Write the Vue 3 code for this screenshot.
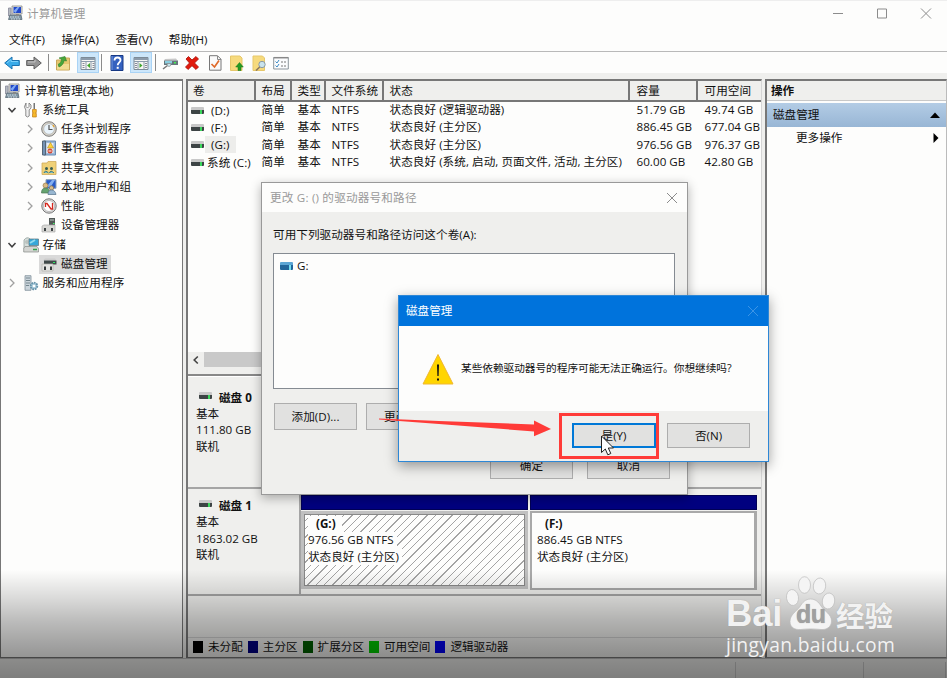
<script setup>
const icons = {
  computer: '<path d="M5 1h10v8H5z" fill="#e4e4de" stroke="#888" stroke-width=".8"/><path d="M6.500 2h7.500v6H6.500z" fill="#2148c8"/><path d="M6.500 6l4-4h2l-4 6z" fill="#7ea9f5"/><path d="M1.500 3h2.500v8H1.500z" fill="#b4bac0" stroke="#889" stroke-width=".8"/><path d="M3 10h11l1 4.500H1.500z" fill="#7f95a3" stroke="#5b6b75" stroke-width=".8"/><path d="M3 12h10M4 14h9" stroke="#d7e2e8" stroke-dasharray="1.500 1"/><path d="M9 9h3v2H9z" fill="#888"/>',
  back: '<path d="M8 2v3.500h7.300v5H8V14L.7 8z" fill="#39aae8" stroke="#1b72b0"/><path d="M3 8l4-3.500v2h7" fill="none" stroke="#7bd0fa"/>',
  forward: '<path d="M8 2v3.500H.7v5H8V14l7.300-6z" fill="#969696" stroke="#5d5d5d"/><path d="M2 7h7V5" fill="none" stroke="#c4c4c4"/>',
  folderup: '<path d="M1.500 5h6l1-2h6v12h-13z" fill="#e6c76e" stroke="#c9a658"/><path d="M2 9h12v5.500H2z" fill="#f3dc92"/><path d="M4 12c3-1 5-4 5-6.500l2.500.5L10 1.500 4 3l2.500 1.200C6.500 6.500 5 8.500 3 9.500z" fill="#48a63a" stroke="#2e7d2a" stroke-width=".6"/>',
  panel: '<path d="M1 2.500h14v12H1z" fill="#f7f7f4" stroke="#7c8b98"/><path d="M1 3h14v2H1z" fill="#8c9bab"/><path d="M1 6.500h14M6 7v7M11 7v7" stroke="#8c9bab"/><path d="M2.500 8.500h2m-2 2h2m-2 2h2m8-4h2m-2 2h2m-2 2h2" stroke="#889"/><path d="M10 8v5L7 10.500z" fill="#42a72e"/>',
  panel2: '<path d="M1 2.500h14v12H1z" fill="#f7f7f4" stroke="#7c8b98"/><path d="M1 3h14v2H1z" fill="#8c9bab"/><path d="M1 6.500h14M5 7v7M11 7v7" stroke="#8c9bab"/><path d="M2 8.500h2m-2 2h2m-2 2h2m8-4h2m-2 2h2m-2 2h2" stroke="#889"/><path d="M6.500 8v5l3-2.500z" fill="#42a72e"/>',
  help: '<path d="M2 .5h12v15H2z" fill="#3461bf" stroke="#173883"/><path d="M3 1v14" stroke="#7397df"/><path d="M5.500 5.500q0-3 3-3t3 2.700c0 2-2.800 2.300-2.800 5" fill="none" stroke="#fff" stroke-width="1.800"/><path d="M7.700 11.800h2v2h-2z" fill="#fff"/>',
  device: '<path d="M3 4l11-.5 1.500 2H2z" fill="#c8c8c8"/><path d="M2 5.500h14v4.500H2z" fill="#66757c"/><path d="M3 6h7v2.500H3z" fill="#8acfe0"/><path d="M12 7h2v1.500h-2z" fill="#4e5"/><path d="M5.500 10.500L1 14" stroke="#777" stroke-width="1.500"/><path d="M5 8.500h4q0 3-2 3t-2-3z" fill="#c8e7ef" stroke="#888" stroke-width=".7"/>',
  cross: '<path d="M2 4l2.500-2.500L8 5l4-3.500L14.500 4 10.500 8l4 4-2.500 2.500L8 10.700 4 14.500 1.500 12l4-4z" fill="#e21a0c" stroke="#a60c05" stroke-width=".8"/>',
  check: '<path d="M2.500.7h8l3.500 3.500v11H2.500z" fill="#fafafa" stroke="#777"/><path d="M10.500 1v3.500H14" fill="none" stroke="#888"/><path d="M4.500 9l3 3L12 5.500" fill="none" stroke="#df6a2a" stroke-width="1.700"/>',
  upfile: '<path d="M1.500 1h9.500l2 2v12.500H1.500z" fill="#f6da7d" stroke="#e6c76a"/><path d="M9 15.500V12H6.700l3.800-4.500 3.800 4.500H12v3.500z" fill="#249b23" stroke="#167418" stroke-width=".5"/>',
  search: '<path d="M2 1h9.500l2 2v12.500H2z" fill="#f6da7d" stroke="#e6c76a"/><circle cx="11" cy="9.500" r="3.200" fill="#c9e3ed" stroke="#8b9aa2"/><path d="M8.700 12L5 15.500" stroke="#8c7960" stroke-width="1.600"/>',
  list: '<path d="M.7 2.500h14.600v11.500H.7z" fill="#fbfcfd" stroke="#8b959c"/><path d="M.7 2.700h14.600" stroke="#888" stroke-width="1.500"/><path d="M2.500 6.500l1.500 1.500L6 5M2.500 10.500L4 12l2-3" fill="none" stroke="#3c8ac4"/><path d="M8 7h5M8 11h5" stroke="#777" stroke-dasharray="2 1"/>',
  tools: '<path d="M3 1v3.500L4.500 6 6 4.500V1q3 1.500 2 5L6.200 8v6q-1.700 2-3.400 0V8Q0 5 3 1z" fill="#eee" stroke="#727272" stroke-width=".8"/><path d="M10.500 1h1.500v6h-1.500z" fill="#777"/><path d="M9.500 7.500h3.800v3h-.7v1h.7v3.500H9.500v-3.500h.7v-1h-.7z" fill="#f6b92a" stroke="#c17b13" stroke-width=".7"/>',
  clock: '<circle cx="8" cy="8" r="7.300" fill="#d6d2c8" stroke="#7e7e7e"/><circle cx="8" cy="8" r="5.300" fill="#eaf4fb" stroke="#aaa" stroke-width=".6"/><path d="M8 4v4.500h3.500" fill="none" stroke="#555" stroke-width="1.200"/><path d="M12 4l1 2" stroke="#e7a83a" stroke-width="1.500"/>',
  event: '<path d="M3 1h11.500v14H3z" fill="#9bb7d7" stroke="#6a8db4"/><path d="M1.500 1h3v14h-3z" fill="#7291b4" stroke="#567"/><path d="M5.500 3h7v10h-7z" fill="#e9edf4"/><path d="M9.500 2.500L12.500 8h-6z" fill="#ffd43a" stroke="#b98b15" stroke-width=".6"/><circle cx="9" cy="11" r="2.500" fill="#d34835"/><path d="M7.500 11h3" stroke="#fff"/>',
  share: '<path d="M1 3h5l1-1.500h8v13H1z" fill="#efd178" stroke="#cfab5c" stroke-width=".8"/><circle cx="5.500" cy="8.500" r="1.500" fill="#365d52"/><circle cx="10.500" cy="8.500" r="1.500" fill="#365d52"/><path d="M3 13q1-3.500 4.500 0M8.500 13q1-3.500 4.500 0" fill="#78bcc1" stroke="#36767f"/>',
  users: '<path d="M5 .7h10v8.600H5z" fill="#275bc9" stroke="#8ca0b7"/><path d="M6 7l5-6h3L9 9z" fill="#84aff0"/><circle cx="4.500" cy="6.500" r="2.500" fill="#dab984" stroke="#8b6f39" stroke-width=".6"/><path d="M.5 14q0-5 4-5t4 5z" fill="#65a36f" stroke="#4a7554" stroke-width=".7"/><circle cx="10.500" cy="9" r="2.200" fill="#d8bb8b" stroke="#7c684a" stroke-width=".7"/><path d="M7 15.500q0-4.500 3.500-4.500t4.500 4.500z" fill="#98b7d1" stroke="#54728b" stroke-width=".7"/>',
  perf: '<circle cx="8" cy="8" r="7.200" fill="#ddd" stroke="#777"/><circle cx="8" cy="8" r="5.500" fill="#fff" stroke="#999" stroke-width=".6"/><path d="M4.500 9V5.500h1.500L10 11h1.500V5" fill="none" stroke="#d5281e" stroke-width="1.300"/>',
  devmgr: '<path d="M8 1h6v8H8z" fill="#525957"/><path d="M9 2h4v2H9z" fill="#87908d"/><path d="M12 6h1.500v1H12z" fill="#4f6"/><path d="M1 9l2-1h11v7H1z" fill="#d8d8d5" stroke="#aaa" stroke-width=".7"/><path d="M3 11h2v3H3zM10 11h2v3h-2z" fill="#3d4244"/>',
  storage: '<path d="M1 3q3-4 6-1v10H1z" fill="#d7dedb" stroke="#879692" stroke-width=".7"/><circle cx="4" cy="5" r="2" fill="#bac2be"/><path d="M6 2h9.500v6.500H6z" fill="#35a8d9" stroke="#687d85" stroke-width=".8"/><path d="M7 6l5-3" stroke="#91dbef" stroke-width="2"/><path d="M2 9.500h12l1.500 2v3.500H.7v-3.500z" fill="#d4d5d2" stroke="#858a87" stroke-width=".7"/><path d="M10 12.500h4" stroke="#2da349" stroke-width="1.500"/>',
  diskmgr: '<path d="M4 2.500h10l1.500 2H2z" fill="#ccc"/><path d="M3 4.500h12.500v4H3z" fill="#40494a"/><path d="M12 6h2v1h-2z" fill="#2ded63"/><path d="M1 8h11v7H1z" fill="#e4e4e2" stroke="#b2b2ad" stroke-width=".7"/><path d="M3 10.500h2V14H3zM9 10.500h2V14H9z" fill="#353a3c"/>',
  services: '<path d="M2 .7h6v14.600H2z" fill="#cbd5dc" stroke="#82919a" stroke-width=".8"/><path d="M3 3h4M3 5.500h4M3 8h4M3 10.500h3" stroke="#74868e"/><circle cx="11" cy="11" r="3.300" fill="#a7c9da" stroke="#6793aa" stroke-width="1.800" stroke-dasharray="1.700 .8"/><circle cx="11" cy="11" r="1.300" fill="#fff"/>',
}
const tree = [
  { t: '计算机管理(本地)', i: 'computer', l: 0 },
  { t: '系统工具', i: 'tools', l: 1, a: 'down' },
  { t: '任务计划程序', i: 'clock', l: 2, a: 'right' },
  { t: '事件查看器', i: 'event', l: 2, a: 'right' },
  { t: '共享文件夹', i: 'share', l: 2, a: 'right' },
  { t: '本地用户和组', i: 'users', l: 2, a: 'right' },
  { t: '性能', i: 'perf', l: 2, a: 'right' },
  { t: '设备管理器', i: 'devmgr', l: 2 },
  { t: '存储', i: 'storage', l: 1, a: 'down' },
  { t: '磁盘管理', i: 'diskmgr', l: 2, sel: true },
  { t: '服务和应用程序', i: 'services', l: 1, a: 'right' },
]
const tools = [
  { i: 'back' }, { i: 'forward' }, { sep: true },
  { i: 'folderup', wide: true }, { i: 'panel', on: true }, { sep: true },
  { i: 'help', wide: true }, { i: 'panel2', on: true }, { sep: true },
  { i: 'device' }, { i: 'cross' }, { i: 'check' }, { i: 'upfile' }, { i: 'search' }, { i: 'list' },
]
const heads = ['卷', '布局', '类型', '文件系统', '状态', '容量', '可用空间']
const rows = [
  ['(D:)', '状态良好 (逻辑驱动器)', '51.79 GB', '49.74 GB'],
  ['(F:)', '状态良好 (主分区)', '886.45 GB', '677.04 GB'],
  ['(G:)', '状态良好 (主分区)', '976.56 GB', '976.37 GB'],
  ['系统 (C:)', '状态良好 (系统, 启动, 页面文件, 活动, 主分区)', '60.00 GB', '42.80 GB'],
]
const legend = [
  ['black', '未分配'], ['navy', '主分区'], ['dgreen', '扩展分区'], ['green', '可用空间'], ['blue', '逻辑驱动器'],
]
</script>

<template>
  <div class="win">
    <header class="title">
      <svg class="ic" viewBox="0 0 16 16" v-html="icons.computer"></svg>
      <span>计算机管理</span>
      <svg class="ctl" viewBox="0 0 100 12"><path d="M1 6.500h10M45.500 2h9v9h-9zM89 1.500l10 10M99 1.500l-10 10" /></svg>
    </header>
    <nav class="menu"><span>文件(F)</span><span>操作(A)</span><span>查看(V)</span><span>帮助(H)</span></nav>
    <div class="toolbar">
      <template v-for="(t, n) in tools" :key="n">
        <i v-if="t.sep" class="sep"></i>
        <b v-else :class="['tb', { on: t.on, wide: t.wide }]"><svg viewBox="0 0 16 16" v-html="icons[t.i]"></svg></b>
      </template>
    </div>

    <main class="panes">
      <section class="tree">
        <div v-for="r in tree" :key="r.t" :class="['node', 'l' + r.l]">
          <span v-if="r.l" class="arr">
            <svg v-if="r.a === 'down'" viewBox="0 0 10 10"><path d="M1.500 3L5 6.800 8.500 3" stroke="#404040" stroke-width="1.500" fill="none" /></svg>
            <svg v-if="r.a === 'right'" viewBox="0 0 10 10"><path d="M3 1l4 4-4 4" stroke="#a0a0a0" stroke-width="1.300" fill="none" /></svg>
          </span>
          <span :class="['lab', { sel: r.sel }]">
            <svg class="ic" viewBox="0 0 16 16" v-html="icons[r.i]"></svg>
            <span>{{ r.t }}</span>
          </span>
        </div>
      </section>

      <section class="mid">
        <div class="row head"><span v-for="h in heads" :key="h">{{ h }}</span></div>
        <div class="list">
          <div v-for="r in rows" :key="r[0]" class="row">
            <span class="vol"><i class="drive"></i><em :class="{ hot: r[0] === '(G:)', wide: r[0].length > 4 }">{{ r[0] }}</em></span>
            <span>简单</span><span>基本</span><span>NTFS</span>
            <span>{{ r[1] }}</span><span>{{ r[2] }}</span><span>{{ r[3] }}</span>
          </div>
        </div>
        <div class="hscroll">
          <svg viewBox="0 0 10 10"><path d="M6.800 1.500L3.200 5l3.600 3.500" stroke="#444" stroke-width="1.600" fill="none" /></svg>
          <i></i>
        </div>
        <div class="disks">
          <div class="disk d0">
            <div class="info"><p class="dn"><i class="drive"></i><b>磁盘 0</b></p><p>基本</p><p>111.80 GB</p><p>联机</p></div>
          </div>
          <div class="disk d1">
            <div class="info"><p class="dn"><i class="drive"></i><b>磁盘 1</b></p><p>基本</p><p>1863.02 GB</p><p>联机</p></div>
            <div class="part pg">
              <div class="bar"></div>
              <div class="pbody hatch">
                <p><b>(G:)</b></p><p><span>976.56 GB NTFS</span></p><p><span>状态良好 (主分区)</span></p>
              </div>
            </div>
            <div class="part pf">
              <div class="bar"></div>
              <div class="pbody">
                <p><b>(F:)</b></p><p><span>886.45 GB NTFS</span></p><p><span>状态良好 (主分区)</span></p>
              </div>
            </div>
          </div>
        </div>
        <div class="legend">
          <span v-for="l in legend" :key="l[0]"><i :class="l[0]"></i>{{ l[1] }}</span>
        </div>
      </section>

      <section class="actions">
        <div class="ahead">操作</div>
        <div class="asel"><span>磁盘管理</span><svg viewBox="0 0 10 6"><path d="M0 6l5-5.500L10 6z" /></svg></div>
        <div class="amore"><span>更多操作</span><svg viewBox="0 0 6 10"><path d="M.5 0l5 5-5 5z" /></svg></div>
      </section>
    </main>
    <footer class="status"><i></i><i></i><i></i></footer>

    <div class="dlg">
      <div class="dt"><span>更改 G: () 的驱动器号和路径</span><svg viewBox="0 0 12 12"><path d="M1 1l10 10M11 1L1 11" stroke="#8c8c8c" fill="none" /></svg></div>
      <div class="db">
        <p>可用下列驱动器号和路径访问这个卷(A):</p>
        <div class="box"><i class="drive bl"></i>G:</div>
        <div class="btns"><span class="btn">添加(D)...</span><span class="btn">更改(C)...</span></div>
        <div class="btns end"><span class="btn">确定</span><span class="btn">取消</span></div>
      </div>
    </div>

    <div class="msg">
      <div class="mt"><span>磁盘管理</span><svg viewBox="0 0 12 12"><path d="M1 1l10 10M11 1L1 11" stroke="#3b94e6" fill="none" /></svg></div>
      <div class="mb">
        <svg viewBox="0 0 32 32"><path d="M16 1.500L31 31H1z" fill="#ffd500" stroke="#f0b732" /><path d="M15 11.500h2l-.4 11.500h-1.200zM15 25.500h2v2h-2z" fill="#111" /></svg>
        <span>某些依赖驱动器号的程序可能无法正确运行。你想继续吗?</span>
      </div>
      <div class="mf"><span class="btn prim">是(Y)</span><span class="btn">否(N)</span></div>
    </div>

    <svg class="note" viewBox="0 0 290 60">
      <path d="M0 8.600L60 11 155 14.500V10.500L172 19 155 26.300V21.500L60 14 0 9.600z" fill="#ff3b38" />
      <rect x="181.500" y="4.500" width="97" height="43" fill="none" stroke="#ff3b38" stroke-width="3" />
      <path d="M222.500 26v16.500l3.800-3.500 2.500 5.800 3-1.300-2.500-5.500h5.200z" fill="#fff" stroke="#222" />
    </svg>

    <div class="shade"></div>

    <div class="mark">
      <div class="brand">
        <span class="bai">Bai</span>
        <span class="paw">
          <svg viewBox="0 0 56 56">
            <g fill="#f4f4f4" stroke="#bcbcbc" stroke-width=".7">
              <ellipse cx="7.500" cy="21.500" rx="6" ry="8" transform="rotate(-8 7.500 21.500)" />
              <ellipse cx="19.500" cy="9" rx="6" ry="8.300" />
              <ellipse cx="34.500" cy="10" rx="6.200" ry="8" transform="rotate(8 34.500 10)" />
              <ellipse cx="43.500" cy="25" rx="6.200" ry="8" transform="rotate(10 43.500 25)" />
              <path d="M25.500 23c5 0 8 3 10.500 7 3.500 5.500 10.500 8 10.500 15 0 6-5 9-10.500 8.500-7-.8-14-.8-20.500 0C10 54 5 51.500 5 45.500c0-7 6.500-10 10-15 2.500-4 5.500-7.500 10.500-7.500z" />
            </g>
          </svg>
          <em>du</em>
        </span>
        <span class="jy">经验</span>
      </div>
      <div class="url">jingyan.baidu.com</div>
    </div>
  </div>
</template>

<style>
body { margin: 0; overflow: hidden; }
</style>

<style scoped>
* { box-sizing: border-box; }
p { margin: 0; }
em, i { font-style: normal; }
svg { display: block; flex: none; }
.win { position: relative; width: 947px; height: 678px; overflow: hidden; display: flex; flex-direction: column; background: #efefed; color: #111; font: 11.6px/16px "Open Sans", "Noto Sans CJK SC", sans-serif; white-space: nowrap; }
.ic { width: 16px; height: 16px; }
.title { height: 28px; padding: 0 15px 2px 7px; display: flex; align-items: center; gap: 4px; background: #fdfdfc; border-top: 1px solid #eee; color: #999; }
.title .ic { margin-bottom: 1px; }
.title span { letter-spacing: .1px; }
.ctl { width: 100px; height: 12px; margin: 0 0 1px auto; fill: none; stroke: #8c8c8c; }
.menu { height: 24px; padding: 1px 9px 0; display: flex; align-items: center; gap: 16.500px; background: #fdfdfc; border-bottom: 1px solid #b9b9b9; }
.toolbar { height: 21px; padding: 0 1px; display: flex; align-items: center; background: #fdfdfc; }
.tb { width: 22.200px; height: 21px; display: flex; align-items: center; justify-content: center; }
.tb svg { width: 16px; height: 16px; }
.tb.on { background: #cce6fa; border: 1px solid #a9d3f5; }
.tb.wide { margin-right: 2px; }
.sep { width: 1px; height: 17px; background: #8b8b8b; margin: 0 3.500px 0 2.500px; }
.panes { height: 585px; padding-top: 6px; display: grid; grid-template-columns: 183px 576px 182px; column-gap: 3px; }
.panes > section { height: 579px; min-width: 0; overflow: hidden; }
.tree { border: 1px solid #777; border-top: 2px solid #777; background: #fdfdfc; }
.node { height: 19.270px; display: flex; align-items: center; }
.node.l0 { padding-left: 3px; }
.node.l1 { padding-left: 2.500px; }
.node.l2 { padding-left: 21px; }
.arr { width: 17px; padding-left: 3px; }
.arr svg { width: 10px; height: 10px; }
.lab { display: flex; align-items: center; gap: 4px; height: 19px; padding: 0 3px 0 2px; }
.l0 .lab { padding-left: 0; gap: 4.500px; }
.lab span { letter-spacing: .1px; }
.lab.sel { background: #d9d9d9; }
.mid { border-left: 2px solid #777; border-top: 2px solid #777; border-bottom: 1px solid #777; border-right: 1px solid #d5d5d5; display: flex; flex-direction: column; }
.row { display: grid; grid-template-columns: 68px 36px 34px 58px 246px 68px 63px; height: 17.300px; align-items: center; letter-spacing: .05px; }
.row > span { padding-left: 5.500px; overflow: hidden; }
.row > span:nth-child(n+6) { padding-left: 6.500px; }
.head { height: 21px; flex: none; background: #efefed; border-bottom: 2px solid #777; align-items: stretch; line-height: 20px; }
.head > span { border-right: 2px solid #777; }
.head > span:first-child { padding-left: 5px; }
.head > span:last-child { border-right: 0; }
.list { height: 250px; flex: none; background: #fdfdfc; }
.list .row > span { padding-bottom: 1px; }
.row > span.vol { display: flex; align-items: center; padding-left: 3px; }
.drive { width: 13px; height: 7px; flex: none; border-top: 3px solid #c8c8c8; background: linear-gradient(90deg, #3d4445 70%, #3bd85d 70% 86%, #3d4445 86%); border-radius: 1px; }
.vol em { margin-left: 1px; padding: 0 6px; line-height: 17px; }
.vol em.hot { background: #ededeb; }
.vol em.wide { padding: 0 0 0 2px; }
.hscroll { height: 15px; flex: none; display: flex; gap: 2px; align-items: center; padding-left: 2px; }
.hscroll svg { width: 12px; height: 10px; }
.hscroll i { flex: 0 0 300px; height: 15px; background: #c9c9c9; }
.disks { margin-top: 7px; flex: none; border-top: 2px solid #888; height: 222px; border-bottom: 2px solid #a5a5a5; }
.disk { height: 113px; display: flex; border-bottom: 2px solid #a5a5a5; }
.d1 { height: 105px; border-bottom: 0; }
.info { width: 113px; padding: 12.500px 0 0 8px; border-right: 2px solid #a5a5a5; line-height: 16.400px; }
.d1 .info { padding-top: 9px; }
.dn { display: flex; gap: 7.500px; padding-left: 2.500px; }
.dn .drive { margin-top: 2px; }
.d0 { border-top: 1px solid #fff; }
.part { display: flex; flex-direction: column; padding-top: 6px; }
.pg { width: 227px; }
.pf { width: 229px; padding-left: 2px; }
.bar { height: 15px; flex: none; background: #00007f; border: 1px solid #000055; }
.pbody { flex: 1; border: 2px solid #a9a9a9; margin-top: 1px; background: #fdfdfc; padding: 3px 0 0 5px; line-height: 16.400px; }
.pbody b { padding: 0 6px 0 8px; }
.hatch { border: 3px solid #c0c0c0; outline: 1px solid #888; outline-offset: -4px; padding: 2px 0 0 4px; background: repeating-linear-gradient(135deg, #fdfdfc 0 5px, #a4a4a4 5px 5.900px); margin-bottom: 5px; }
.hatch p { height: 16.400px; }
.hatch b, .hatch span { display: inline-block; background: #fdfdfc; }
.hatch span { padding-right: 3px; }
.pf .pbody { margin-bottom: 4px; border-width: 2px 3px 2px 2px; }
.legend { margin-top: auto; height: 20px; display: flex; align-items: center; gap: 5px; padding: 0 0 2px 5px; border-top: 1px solid #d0d0d0; }
.legend span { display: flex; align-items: center; gap: 5px; }
.legend i { width: 10px; height: 12px; }
.black { background: #000; } .navy { background: #000080; } .dgreen { background: #005c00; } .green { background: #00c800; } .blue { background: #0000f0; }
.actions { border-left: 2px solid #777; border-top: 2px solid #777; border-right: 1px solid #bbb; border-bottom: 1px solid #888; background: #fdfdfc; }
.ahead { height: 20px; padding-left: 4px; line-height: 20px; background: #efefed; border-bottom: 1px solid #c8c8c8; font-weight: 600; }
.asel { height: 24px; margin-top: 2px; padding: 0 6px; display: flex; justify-content: space-between; align-items: center; background: linear-gradient(#b3cce5, #98b6d5); }
.asel svg { width: 10px; height: 6px; }
.amore { height: 22px; padding: 0 7px 0 29px; display: flex; justify-content: space-between; align-items: center; }
.amore svg { width: 6px; height: 10px; }
.status { flex: 1; display: grid; grid-template-columns: 736px 128px 82px; padding-top: 3px; border-top: 1px solid #bbb; }
.status i { border-right: 1px solid #ccc; }
.dlg { position: absolute; left: 261px; top: 182px; width: 427px; height: 313px; border: 1px solid #999; background: #efefed; box-shadow: 0 3px 10px rgba(0,0,0,.3); }
.dt { height: 29px; padding: 0 9px 0 8px; display: flex; align-items: center; justify-content: space-between; background: #fdfdfc; color: #999; }
.dt span { letter-spacing: .2px; }
.dt svg, .mt svg { width: 12px; height: 12px; }
.db { padding: 15px 12px 0 11px; letter-spacing: .05px; }
.box { display: flex; align-items: flex-start; gap: 4px; margin-top: 10px; height: 136px; border: 1px solid #858b92; background: #fdfdfc; padding: 4px 6px; }
.drive.bl { margin-top: 4px; height: 8px; border-top-color: #5ba5d4; background: linear-gradient(90deg, #21659a 70%, #72def0 70% 86%, #21659a 86%); }
.btns { display: flex; gap: 9px; margin-top: 14px; }
.btns:not(.end) { padding-left: 1px; }
.btns.end { justify-content: flex-end; gap: 14px; margin-top: 22px; padding-right: 5px; }
.btn { width: 83px; height: 27px; display: flex; align-items: center; justify-content: center; background: #e1e1e0; border: 1px solid #adadad; }
.msg { position: absolute; left: 398px; top: 295px; width: 371px; height: 167px; border: 1px solid #2d87d6; background: #fdfdfc; box-shadow: 0 4px 12px rgba(0,0,0,.38); display: flex; flex-direction: column; }
.mt { height: 30px; padding: 0 9px 0 7px; display: flex; align-items: center; justify-content: space-between; background: #0073dc; color: #fff; }
.mb { height: 85px; padding: 0 0 0 23px; display: flex; align-items: center; gap: 7px; font-size: 10.700px; }
.mb svg { width: 32px; height: 32px; }
.mb span { letter-spacing: -.05px; padding-bottom: 1px; }
.mf { flex: 1; background: #efefed; display: flex; justify-content: flex-end; gap: 11px; padding: 12px 18px 0 0; }
.mf .btn { height: 25px; width: 83px; }
.mf .btn.prim { width: 84px; border: 2px solid #0078d7; }
.note { position: absolute; left: 379px; top: 410px; width: 290px; height: 60px; }
.shade { position: absolute; left: 0; right: 0; bottom: 0; height: 108px; background: linear-gradient(rgba(0,0,0,0), rgba(0,0,0,.15) 28%, rgba(0,0,0,.25) 46%, rgba(0,0,0,.34) 65%, rgba(0,0,0,.41) 81%, rgba(0,0,0,.47)); }
.mark { position: absolute; left: 726px; top: 576px; width: 172px; color: #f2f2f2; text-shadow: 0 0 1px #999; }
.brand { display: flex; align-items: flex-start; height: 55px; }
.bai { width: 59px; padding-top: 20px; font: bold 36.500px/36px "Liberation Sans", sans-serif; letter-spacing: -.2px; }
.paw { position: relative; width: 51px; height: 55px; }
.paw svg { width: 56px; height: 56px; }
.paw em { position: absolute; left: 11px; top: 26px; font: bold 25px/25px "Liberation Sans", sans-serif; color: #a0a0a0; letter-spacing: -.5px; }
.jy { padding-top: 24px; font: bold 28.500px/29px "Noto Sans CJK SC", sans-serif; }
.url { font: 500 19.300px/24px "Open Sans", sans-serif; letter-spacing: .3px; margin-top: 2px; }
</style>
